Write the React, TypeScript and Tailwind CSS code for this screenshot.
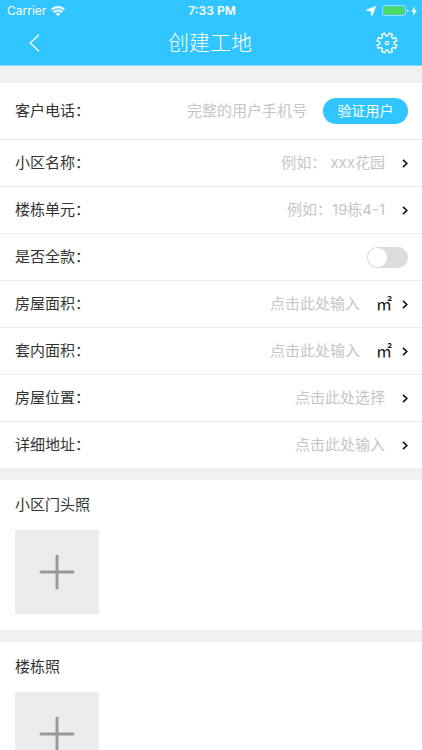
import type { ReactNode } from "react"

const cjk = "font-['Inter','Noto_Sans_CJK_SC',sans-serif]"

// eight teeth, starting half a step away from the top
const gearPoints = Array.from({ length: 8 }, (_, i) => {
  const mid = 22.5 + i * 45
  return [
    [mid - 14, 8],
    [mid - 10, 11],
    [mid + 10, 11],
    [mid + 14, 8],
  ].map(([deg, r]) => {
    const a = (deg * Math.PI) / 180
    return `${(12 + r * Math.sin(a)).toFixed(2)},${(12 - r * Math.cos(a)).toFixed(2)}`
  }).join(" ")
}).join(" ")

function Chevron() {
  return (
    <svg viewBox="0 0 6 9" className="w-[6px] h-[9px] shrink-0" fill="none" stroke="#111" strokeWidth="1.6">
      <path d="M1 .9l3.8 3.6L1 8.1" />
    </svg>
  )
}

function StatusBar() {
  return (
    <div className="grid grid-cols-3 items-center h-[21px] pl-[7px] pr-[5px] text-[12px] leading-4">
      <div className="flex items-center gap-[5px]">
        <span>Carrier</span>
        <svg viewBox="0 0 14 10" className="w-[14px] h-[10px]" fill="none" stroke="white" strokeWidth="2.1">
          <path d="M.7 3.7a9 9 0 0 1 12.6 0" />
          <path d="M2.8 6.3a5.9 5.9 0 0 1 8.4 0" />
          <path d="M7 10L4.7 7.9a3.2 3.2 0 0 1 4.6 0z" fill="white" stroke="none" />
        </svg>
      </div>
      <span className="text-center font-semibold">7:33 PM</span>
      <div className="flex items-center justify-end">
        <svg viewBox="0 0 10 10" className="w-[10px] h-[10px] mr-[6px]" fill="white">
          <path d="M9.6.4L6 9.6 4.9 5.1.4 4z" stroke="white" strokeWidth=".8" strokeLinejoin="round" />
        </svg>
        <svg viewBox="0 0 27 11" className="w-[27px] h-[11px] mr-[2px]">
          <rect x=".5" y=".5" width="23" height="10" rx="2.5" fill="none" stroke="white" strokeOpacity=".5" />
          <rect x="2" y="1.5" width="20" height="8" rx="1" fill="#4cd964" />
          <path d="M25 4a1.6 1.6 0 0 1 0 3.4z" fill="white" fillOpacity=".5" />
        </svg>
        <svg viewBox="0 0 6 10" className="w-[6px] h-[10px]" fill="white">
          <path d="M4 0L0 5.6h2.5L2 10l4-5.8H3.4z" />
        </svg>
      </div>
    </div>
  )
}

function Header() {
  return (
    <header className="bg-[#30c5ff] text-white border-b border-[#8fdcfb]">
      <StatusBar />
      <div className="flex items-center justify-between h-[44px] px-[24px]">
        <button type="button" aria-label="返回" className="w-[20px] flex justify-center">
          <svg viewBox="0 0 11 18" className="w-[11px] h-[18px]" fill="none" stroke="white" strokeWidth="1.3">
            <path d="M10 .7L1.2 9 10 17.3" />
          </svg>
        </button>
        <h1 className="text-[21px] leading-7 font-light">创建工地</h1>
        <button type="button" aria-label="设置" className="w-[22px]">
          <svg viewBox="0 0 24 24" className="size-[22px]" fill="none" stroke="white" strokeWidth="1.5" strokeLinejoin="round">
            <polygon points={gearPoints} />
            <circle cx="12" cy="12" r="1.8" />
          </svg>
        </button>
      </div>
    </header>
  )
}

const label = "text-[15px] leading-6 text-[#333] shrink-0"
const field = "flex-1 min-w-0 text-right text-[15px] leading-6 outline-none placeholder:text-[#c5c5ca]"

function Row({ children, tall = false }: { children: ReactNode; tall?: boolean }) {
  return (
    <div className={`${tall ? "h-[57px]" : "h-[47px]"} flex items-center pl-[15px] pr-[14px] border-b border-[#ececec] last:h-[46px] last:border-b-0`}>
      {children}
    </div>
  )
}

function InputRow({ id, name, hint, unit }: { id: string; name: string; hint: string; unit?: string }) {
  return (
    <Row>
      <label htmlFor={id} className={label}>{name}：</label>
      <input id={id} type="text" placeholder={hint} className={field} />
      {unit && <span className="ml-[16px] text-[16px] leading-6 text-[#111]">{unit}</span>}
      <span className={unit ? "ml-[10px]" : "ml-[17px]"}>
        <Chevron />
      </span>
    </Row>
  )
}

function PhotoSection({ title }: { title: string }) {
  return (
    <section className="bg-white mb-[12px] px-[15px] pt-[13px] pb-[16px]">
      <h2 className="text-[15px] leading-6 text-[#333]">{title}</h2>
      <button type="button" aria-label={`添加${title}`} className="mt-[13px] size-[84px] bg-[#ececec] flex items-center justify-center">
        <svg viewBox="0 0 36 36" className="size-[36px]" stroke="#999" strokeWidth="3" strokeLinecap="round">
          <path d="M18 2v32M2 18h32" />
        </svg>
      </button>
    </section>
  )
}

export default function App() {
  return (
    <div className={`${cjk} h-screen overflow-hidden bg-[#f0f0f0]`}>
      <Header />
      <main className="pt-[17px]">
        <form className="bg-white mb-[12px]">
          <Row tall>
            <label htmlFor="phone" className={label}>客户电话：</label>
            <input id="phone" type="tel" placeholder="完整的用户手机号" className={field} />
            <button type="button" className="ml-[16px] w-[85px] h-[26px] rounded-full bg-[#30c5ff] text-white text-[14px] leading-5">
              验证用户
            </button>
          </Row>
          <InputRow id="estate" name="小区名称" hint="例如： xxx花园" />
          <InputRow id="building" name="楼栋单元" hint="例如：19栋4-1" />
          <Row>
            <label htmlFor="paid" className={label}>是否全款：</label>
            <input
              id="paid"
              type="checkbox"
              role="switch"
              className="ml-auto appearance-none w-[41px] h-[21px] rounded-full bg-[#dcdcdc] p-px before:block before:size-[19px] before:rounded-full before:bg-white checked:bg-[#30c5ff] checked:before:ml-auto"
            />
          </Row>
          <InputRow id="area" name="房屋面积" hint="点击此处输入" unit="㎡" />
          <InputRow id="inner-area" name="套内面积" hint="点击此处输入" unit="㎡" />
          <Row>
            <span id="location" className={label}>房屋位置：</span>
            <button type="button" aria-labelledby="location" className="flex-1 flex items-center justify-end gap-[17px] text-[15px] leading-6 text-[#c5c5ca]">
              点击此处选择
              <Chevron />
            </button>
          </Row>
          <InputRow id="address" name="详细地址" hint="点击此处输入" />
        </form>
        <PhotoSection title="小区门头照" />
        <PhotoSection title="楼栋照" />
      </main>
    </div>
  )
}
